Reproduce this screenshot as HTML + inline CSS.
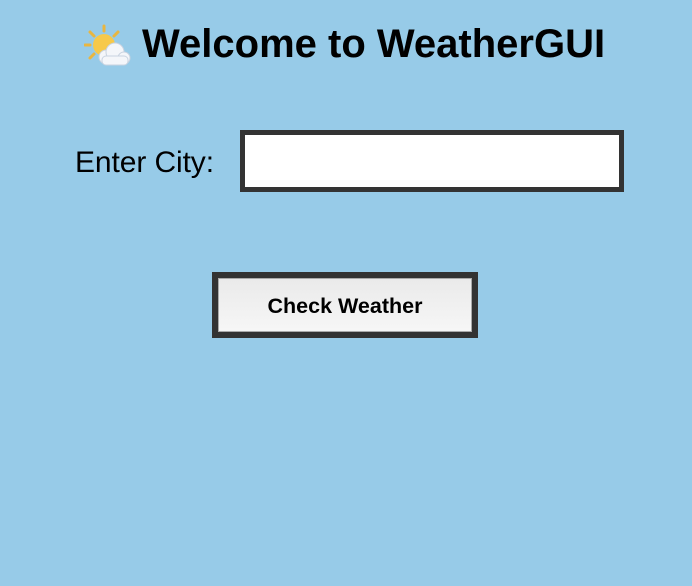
<!DOCTYPE html>
<html><head><meta charset="utf-8"><style>
html,body{margin:0;padding:0;}
body{width:692px;height:586px;background:#97cbe8;position:relative;overflow:hidden;font-family:"Liberation Sans",Arial,sans-serif;}
.t{position:absolute;left:142px;top:19px;font-size:40px;font-weight:bold;color:#000;white-space:nowrap;line-height:50px;letter-spacing:0px;}
.ic{position:absolute;left:84px;top:24px;}
.l{position:absolute;left:75px;top:145px;font-size:30px;color:#000;line-height:36px;letter-spacing:-0.1px;}
.in{position:absolute;left:240px;top:130px;width:374px;height:52px;background:#fff;border:5px solid #333;}
.b{position:absolute;left:212px;top:272px;width:254px;height:54px;border:6px solid #333;background:#333;}
.b div{position:absolute;left:0;top:0;right:0;bottom:0;border:1px solid #aaa;background:linear-gradient(#eaeaea,#f6f6f6);font-weight:bold;font-size:21.5px;text-align:center;line-height:54px;}
</style></head><body>
<svg class="ic" width="48" height="44" viewBox="0 0 48 44">
<g stroke="#e9b640" stroke-width="3" stroke-linecap="round">
<line x1="20" y1="2" x2="20" y2="7"/><line x1="6" y1="8" x2="10" y2="12"/><line x1="34" y1="8" x2="30" y2="12"/><line x1="1" y1="21" x2="6" y2="21"/><line x1="6" y1="34" x2="10" y2="30"/>
</g>
<circle cx="20" cy="21" r="11" fill="#f7c94a"/>
<g fill="#f4f6fa" stroke="#c9d3e0" stroke-width="1">
<circle cx="22" cy="33" r="7"/><circle cx="31" cy="28" r="9"/><circle cx="40" cy="34" r="6"/><rect x="18" y="32" width="26" height="9" rx="4"/>
</g>
</svg>
<div class="t">Welcome to WeatherGUI</div>
<div class="l">Enter City:</div>
<div class="in"></div>
<div class="b"><div>Check Weather</div></div>
</body></html>
